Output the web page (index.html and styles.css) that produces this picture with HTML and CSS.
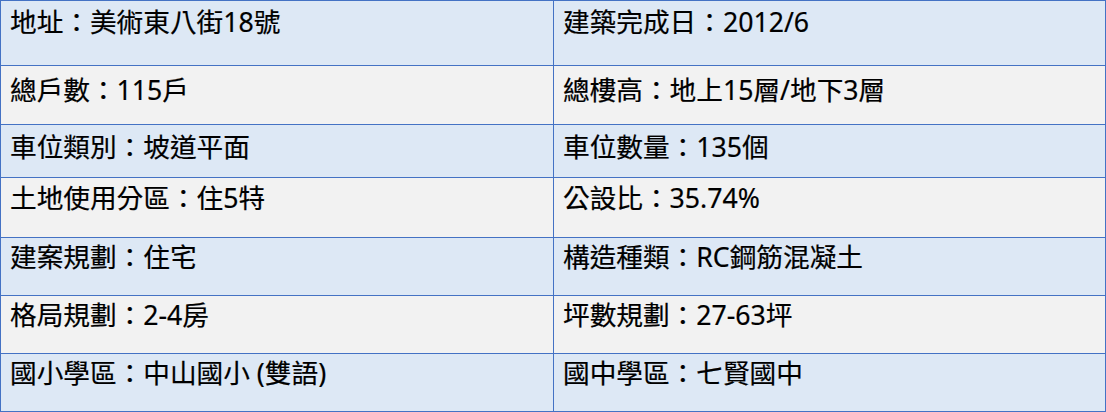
FILE: index.html
```html
<!DOCTYPE html>
<html lang="zh-Hant">
<head>
<meta charset="utf-8">
<title>建案資訊</title>
<link rel="stylesheet" href="styles.css">
</head>
<body>
<div class="info-table">
  <div class="cell row-blue row-h1">地址：美術東八街18號</div>
  <div class="cell row-blue row-h1">建築完成日：2012/6</div>
  <div class="cell row-gray row-h2">總戶數：115戶</div>
  <div class="cell row-gray row-h2">總樓高：地上15層/地下3層</div>
  <div class="cell row-blue row-h3">車位類別：坡道平面</div>
  <div class="cell row-blue row-h3">車位數量：135個</div>
  <div class="cell row-gray row-h4">土地使用分區：住5特</div>
  <div class="cell row-gray row-h4">公設比：35.74%</div>
  <div class="cell row-blue row-h5">建案規劃：住宅</div>
  <div class="cell row-blue row-h5">構造種類：RC鋼筋混凝土</div>
  <div class="cell row-gray row-h5">格局規劃：2-4房</div>
  <div class="cell row-gray row-h5">坪數規劃：27-63坪</div>
  <div class="cell row-blue row-h5">國小學區：中山國小 (雙語)</div>
  <div class="cell row-blue row-h5">國中學區：七賢國中</div>
</div>
</body>
</html>
```
FILE: styles.css
```css
html, body {
  margin: 0;
  padding: 0;
  background: #ffffff;
}

.info-table {
  display: grid;
  grid-template-columns: 553px 552px;
  width: 1106px;
  box-sizing: border-box;
  border-top: 1px solid #4472c4;
  border-left: 1px solid #4472c4;
  font-family: "Noto Sans", "Noto Sans CJK TC", sans-serif;
  font-size: 26.67px;
  line-height: 32px;
  color: #000000;
}

.cell {
  box-sizing: border-box;
  border-right: 1px solid #4472c4;
  border-bottom: 1px solid #4472c4;
  padding: 5px 0 0 9px;
  white-space: nowrap;
  -webkit-text-stroke: 0.2px #000000;
}

.row-blue { background: #dde8f5; }
.row-gray { background: #f2f2f2; }

.row-h1 { height: 65px; padding-top: 5px; }
.row-h2 { height: 59px; padding-top: 8px; }
.row-h3 { height: 53px; padding-top: 6px; }
.row-h4 { height: 60px; padding-top: 4px; }
.row-h5 { height: 58px; padding-top: 3px; }
```
